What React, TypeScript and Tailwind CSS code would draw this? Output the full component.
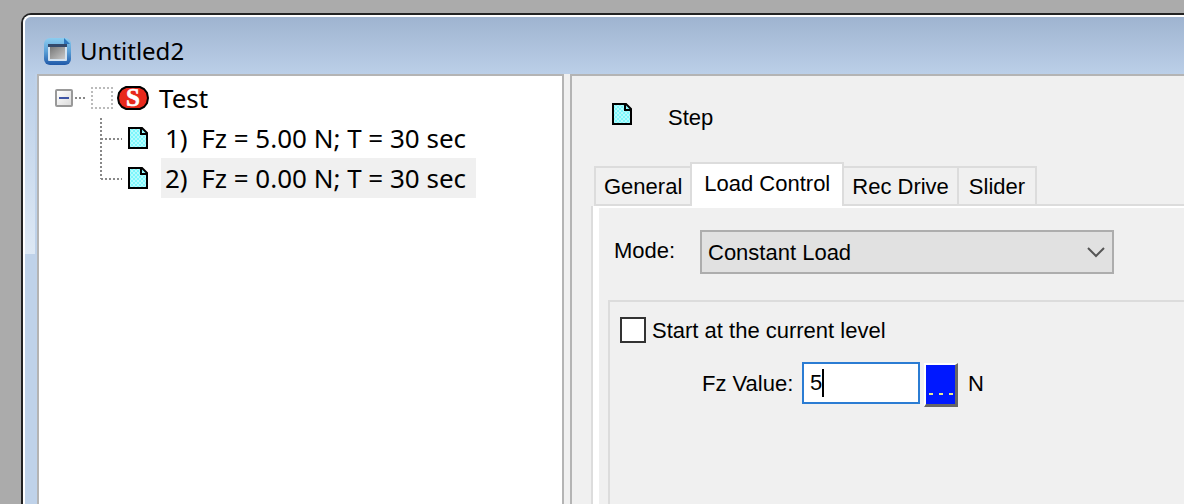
import { ReactNode, useState } from "react";

const steps = [
  { id: 1, label: "1)  Fz = 5.00 N; T = 30 sec" },
  { id: 2, label: "2)  Fz = 0.00 N; T = 30 sec" },
];

const tabs = ["General", "Load Control", "Rec Drive", "Slider"];

function WindowIcon() {
  return (
    <svg className="size-7" viewBox="0 0 28 28" aria-hidden="true">
      <defs>
        <linearGradient id="frame" x1="0" y1="0" x2="0" y2="1">
          <stop offset="0" stopColor="#8ccdf0" />
          <stop offset="0.5" stopColor="#5a9fd6" />
          <stop offset="1" stopColor="#1f58a8" />
        </linearGradient>
        <linearGradient id="screen" x1="0" y1="0" x2="1" y2="1">
          <stop offset="0" stopColor="#777777" />
          <stop offset="1" stopColor="#c8c8c8" />
        </linearGradient>
      </defs>
      <rect x="0" y="1" width="27" height="27" rx="6" fill="url(#frame)" />
      <path d="M20 1l6 6h-6z" fill="#2f77bd" />
      <rect x="4" y="7" width="19" height="17" rx="1" fill="#d3e2f0" />
      <rect x="4" y="7" width="19" height="3" fill="#34496b" />
      <rect x="6" y="10" width="15" height="12" fill="url(#screen)" />
    </svg>
  );
}

function PageIcon() {
  return (
    <svg className="h-6 w-[22px] shrink-0" viewBox="0 0 22 24" aria-hidden="true">
      <defs>
        <pattern id="dots" width="4" height="4" patternUnits="userSpaceOnUse">
          <rect width="4" height="4" fill="#7cf6fb" />
          <rect width="2" height="2" fill="#b5fbfd" />
          <rect x="2" y="2" width="2" height="2" fill="#b5fbfd" />
        </pattern>
      </defs>
      <path d="M2 2h13l5 5v15H2z" fill="url(#dots)" stroke="#000" strokeWidth="2" />
      <path d="M14 2v6h6" fill="none" stroke="#000" strokeWidth="2" />
    </svg>
  );
}

function TestIcon() {
  return (
    <svg className="h-[26px] w-8 shrink-0" viewBox="0 0 32 26" aria-hidden="true">
      <path
        d="M9 2h14l4 2 3 4 1 5-1 5-3 4-4 2H9l-4-2-3-4-1-5 1-5 3-4z"
        fill="#e8291c"
        stroke="#000"
        strokeWidth="2"
      />
      <text
        x="16"
        y="21"
        textAnchor="middle"
        fill="#fff"
        stroke="#fff"
        strokeWidth="0.6"
        fontFamily="Liberation Serif, serif"
        fontWeight="bold"
        fontSize="25"
      >
        S
      </text>
    </svg>
  );
}

function Branch({ last }: { last: boolean }) {
  return (
    <svg className="h-10 w-6 shrink-0" viewBox="0 0 24 40" aria-hidden="true">
      <path
        d={last ? "M1 0V21M1 21H22" : "M1 0V40M1 21H22"}
        fill="none"
        stroke="#888"
        strokeWidth="2"
        strokeDasharray="2 2"
      />
    </svg>
  );
}

function StepTree() {
  const [open, setOpen] = useState(true);
  const [selected, setSelected] = useState(2);

  return (
    <div className="w-[527px] shrink-0 border-2 border-b-0 border-[#b4b4b4] bg-white pt-[2px] font-['Noto_Sans','Open_Sans',sans-serif] text-[26px] text-black">
      {/* Root node */}
      <div className="flex h-10 items-center pl-4">
        <button
          type="button"
          aria-label="Toggle Test"
          onClick={() => setOpen(!open)}
          className="flex size-[18px] items-center justify-center rounded-xs border-2 border-[#999] bg-linear-to-br from-white to-[#dcdcdc]"
        >
          <span className="h-[2px] w-[10px] bg-[#3f55a5]" />
        </button>
        <span className="ml-[2px] w-[10px] border-t-2 border-dotted border-[#888]" />
        <span className="mr-1 ml-[6px] size-[22px] border-2 border-dotted border-[#bbb]" />
        <TestIcon />
        <span className="ml-[6px] px-1">Test</span>
      </div>

      {/* Steps */}
      {open && (
        <ul className="pl-[61px]">
          {steps.map((step, i) => (
            <li key={step.id} className="flex h-10 items-center">
              <Branch last={i === steps.length - 1} />
              <span className="ml-[3px] flex">
                <PageIcon />
              </span>
              <button
                type="button"
                onClick={() => setSelected(step.id)}
                className={`ml-3 h-10 min-w-[315px] px-1 text-left whitespace-pre ${
                  selected === step.id ? "bg-[#f0f0f0]" : ""
                }`}
              >
                {step.label}
              </button>
            </li>
          ))}
        </ul>
      )}
    </div>
  );
}

function Tab({
  active,
  onClick,
  children,
}: {
  active: boolean;
  onClick: () => void;
  children: ReactNode;
}) {
  return (
    <button
      type="button"
      role="tab"
      aria-selected={active}
      onClick={onClick}
      className={
        active
          ? "h-11 border-2 border-b-0 border-[#dcdcdc] bg-white px-3 pb-1"
          : "h-10 border-t-2 border-r-2 border-b-2 border-[#dcdcdc] px-2 first:border-r-0 first:border-l-2 last-of-type:px-[10px]"
      }
    >
      {children}
    </button>
  );
}

function LoadControl() {
  const [mode, setMode] = useState("Constant Load");
  const [value, setValue] = useState("5");

  return (
    <div className="flex flex-1 flex-col pt-[22px] pl-[9px]">
      <div className="flex items-center pl-[6px]">
        <label htmlFor="mode" className="w-[86px] pb-1">
          Mode:
        </label>
        <div className="grid w-[414px] items-center">
          <select
            id="mode"
            value={mode}
            onChange={(e) => setMode(e.target.value)}
            className="col-start-1 row-start-1 h-11 appearance-none border-2 border-[#adadad] bg-[#e1e1e1] px-[6px]"
          >
            <option>Constant Load</option>
            <option>Linear Load</option>
          </select>
          <svg
            className="pointer-events-none col-start-1 row-start-1 mr-2 h-3 w-5 justify-self-end"
            viewBox="0 0 20 12"
            aria-hidden="true"
          >
            <path d="M2 2l8 8 8-8" fill="none" stroke="#555" strokeWidth="2" />
          </svg>
        </div>
      </div>

      {/* Level settings */}
      <div className="mt-[26px] flex-1 border-t-2 border-l-2 border-[#dcdcdc] pt-[10px] pl-[10px]">
        <label className="flex h-9 items-center gap-[6px]">
          <input
            type="checkbox"
            className="size-[26px] appearance-none border-2 border-[#333] bg-white checked:bg-[#0078d7]"
          />
          Start at the current level
        </label>
        <div className="mt-[14px] flex items-center pl-[82px]">
          <label htmlFor="fz" className="w-[100px] pb-1">
            Fz Value:
          </label>
          <div className="grid items-center pb-1">
            <input
              id="fz"
              value={value}
              onChange={(e) => setValue(e.target.value)}
              className="col-start-1 row-start-1 h-[42px] w-[118px] border-2 border-[#2b7cd3] bg-white px-[6px] caret-black outline-none"
            />
            <span className="pointer-events-none col-start-1 row-start-1 ml-5 h-7 w-[2px] bg-black" />
          </div>
          <button
            type="button"
            aria-label="Choose value"
            className="ml-1 flex h-11 w-[34px] items-end justify-center gap-[6px] border-2 border-r-3 border-b-3 border-t-white border-r-[#666] border-b-[#666] border-l-white bg-[#0018ff] pb-[9px]"
          >
            <span className="h-[2px] w-1 bg-[#e8e88a]" />
            <span className="h-[2px] w-1 bg-[#e8e88a]" />
            <span className="h-[2px] w-1 bg-[#e8e88a]" />
          </button>
          <span className="ml-[10px] pb-1">N</span>
        </div>
      </div>
    </div>
  );
}

function StepPanel() {
  const [tab, setTab] = useState("Load Control");

  return (
    <div className="flex min-w-0 flex-1 flex-col border-t-2 border-l-2 border-[#b4b4b4] bg-[#f0f0f0] pl-[19px] font-['Liberation_Sans',Arial,sans-serif] text-[22px] text-black">
      <div className="flex h-[86px] items-center pl-5">
        <span className="flex pb-[10px]">
          <PageIcon />
        </span>
        <h1 className="ml-[35px] pb-1">Step</h1>
      </div>
      <div role="tablist" className="flex items-end pl-[3px]">
        {tabs.map((name) => (
          <Tab key={name} active={tab === name} onClick={() => setTab(name)}>
            {name}
          </Tab>
        ))}
        <span className="flex-1 border-b-2 border-[#dcdcdc]" />
      </div>
      <div className="flex flex-1 border-l-2 border-[#dcdcdc]">
        <div className="flex flex-1 border-t-2 border-l-6 border-white">
          {tab === "Load Control" && <LoadControl />}
        </div>
      </div>
    </div>
  );
}

export default function App() {
  return (
    <div className="flex min-h-screen overflow-hidden bg-[#ababab] pt-[13px] pl-[21px]">
      <div className="flex min-w-0 flex-1 rounded-tl-[10px] border-t-2 border-l-2 border-[#222] bg-[#bfd2e9]">
        <div className="flex min-w-0 flex-1 flex-col rounded-tl-lg border-t-2 border-l-2 border-white">
          {/* Title bar */}
          <div className="flex h-[57px] items-center gap-2 rounded-tl-md bg-linear-to-b from-[#9fb4d0] to-[#bbcfe8] pt-[10px] pl-[19px]">
            <WindowIcon />
            <span className="font-['Noto_Sans','Open_Sans',sans-serif] text-2xl text-black">
              Untitled2
            </span>
          </div>
          <div className="flex flex-1">
            {/* Window edge */}
            <div className="w-3 shrink-0">
              <div className="h-[180px] w-[10px] bg-linear-to-b from-[#bbcfe8] to-[#dde8f4]" />
            </div>
            <StepTree />
            {/* Splitter */}
            <div className="w-[6px] shrink-0 bg-[#f0f0f0]" />
            <StepPanel />
          </div>
        </div>
      </div>
    </div>
  );
}
